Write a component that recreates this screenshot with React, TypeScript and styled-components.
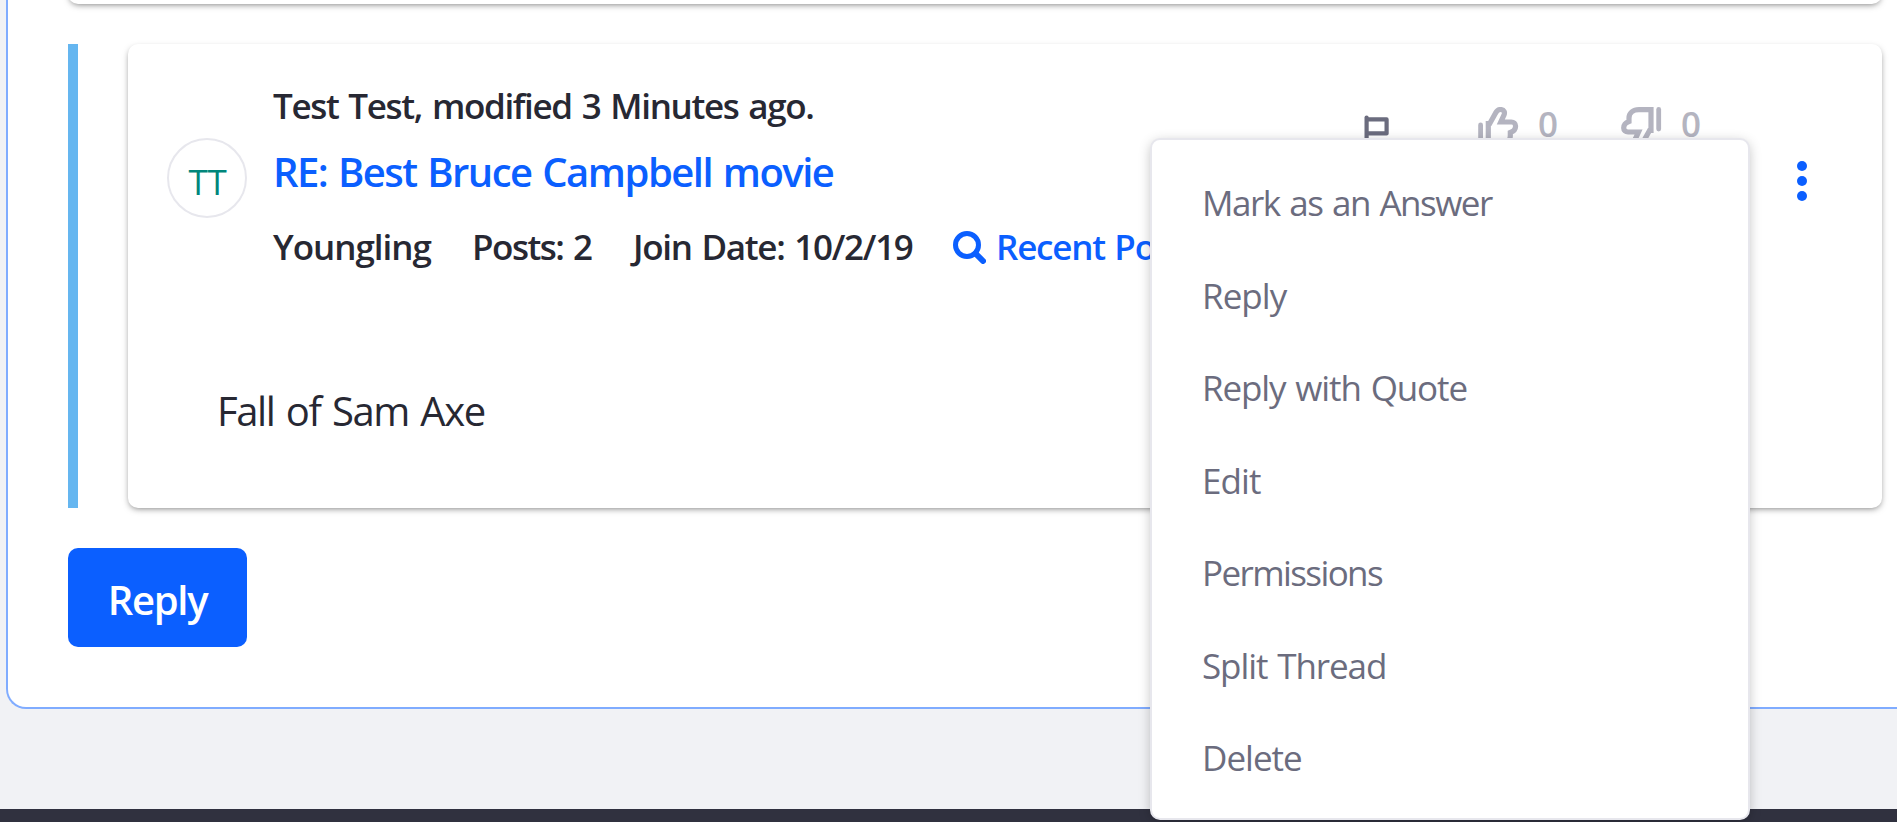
import React from "react";
import styled, { createGlobalStyle } from "styled-components";

const GlobalStyle = createGlobalStyle`
  * { box-sizing: border-box; }
  html, body { margin: 0; height: 822px; overflow: hidden; }
  body {
    background: #f1f2f5;
    color: #272833;
    font-family: "Segoe UI", "Open Sans", "Noto Sans", sans-serif;
    font-size: 40px;
    line-height: 1.5;
  }
`;

const Page = styled.div`
  position: relative;
  display: flex;
  flex-direction: column;
  height: 822px;
  overflow: hidden;
`;

const Panel = styled.main`
  display: flex;
  flex: none;
  flex-direction: column;
  align-items: flex-start;
  height: 709px;
  margin-left: 6px;
  padding: 0 15px 0 60px;
  background: #fff;
  border: 2px solid #80acff;
  border-top: 0;
  border-right: 0;
  border-bottom-left-radius: 20px;
`;

const Footer = styled.footer`
  height: 13px;
  margin-top: 100px;
  background: #30313f;
`;

const Card = styled.article`
  background: #fff;
  border-radius: 10px;
  box-shadow: 0 2.5px 7.5px -2.5px rgba(0, 0, 0, 0.6);
`;

const PreviousCard = styled(Card)`
  flex: none;
  width: 100%;
  height: 40px;
  margin-top: -36px;
`;

const Thread = styled.section`
  flex: none;
  width: 100%;
  height: 464px;
  margin-top: 40px;
  padding-left: 50px;
  border-left: 10px solid #65b6f0;
`;

const MessageCard = styled(Card)`
  height: 100%;
  padding: 35px 39px 0;
`;

const Header = styled.header`
  display: flex;
  height: 255px;
`;

const Avatar = styled.div`
  display: flex;
  align-items: center;
  justify-content: center;
  width: 80px;
  height: 80px;
  margin-top: 59px;
  padding: 9px 0 0 1px;
  border: 2px solid #e7e7ed;
  border-radius: 50%;
  color: #00867b;
  font-size: 35px;
  letter-spacing: -0.4px;
`;

const Summary = styled.div`
  width: 900px;
  margin-left: 26px;
  font-size: 35px;
  font-weight: 600;
  white-space: nowrap;
`;

const Byline = styled.div`
  height: 53px;
  line-height: 53px;
  letter-spacing: -1.35px;
  word-spacing: 2.2px;
`;

const Title = styled.a`
  display: block;
  height: 60px;
  margin-top: 10px;
  line-height: 60px;
  color: #0b5fff;
  font-size: 40px;
  letter-spacing: -1.5px;
  word-spacing: 1.7px;
`;

const Stats = styled.div`
  display: flex;
  height: 53px;
  margin-top: 18px;
  line-height: 53px;
`;

const Stat = styled.span<{ $width: number; $spacing: number }>`
  flex: none;
  width: ${(p) => p.$width}px;
  letter-spacing: ${(p) => p.$spacing}px;
  word-spacing: 2px;
`;

const RecentPosts = styled.a`
  display: flex;
  color: #0b5fff;
  letter-spacing: -1.2px;
  word-spacing: 1.5px;

  svg { flex: none; margin: 11px 10px 0 0; }
`;

const Actions = styled.div`
  display: flex;
  align-items: flex-start;
  margin-left: auto;
  padding-top: 28px;
  color: #b4b4c0;
  font-size: 35px;
  font-weight: 600;
`;

const FlagIcon = styled.svg`
  margin: 8px 89px 0 0;
  color: #6b6c7e;
`;

const Vote = styled.div`
  display: flex;
  width: 143px;

  svg { flex: none; }
  span {
    margin: -10px 0 0 19px;
    line-height: 53px;
  }
`;

const MoreButton = styled.button`
  width: 10px;
  height: 40px;
  margin: 82px 36px 0 33px;
  padding: 0;
  border: 0;
  background: none;
  color: #0b5fff;

  svg { display: block; }
`;

const Body = styled.p`
  margin: 47px 0 0 50px;
  letter-spacing: -1.4px;
  word-spacing: 2.4px;
`;

const ReplyButton = styled.button`
  flex: none;
  width: 179px;
  height: 99px;
  margin-top: 40px;
  padding: 5px 0 0;
  border: 0;
  border-radius: 10px;
  background: #0b5fff;
  color: #fff;
  font: inherit;
  font-weight: 600;
  letter-spacing: -1.3px;
`;

const Menu = styled.ul`
  position: absolute;
  top: 138px;
  left: 1150px;
  width: 600px;
  height: 682px;
  margin: 0;
  padding: 17px 0 0;
  list-style: none;
  background: #fff;
  border: 2px solid #e7e7ed;
  border-radius: 10px;
  box-shadow: 0 2.5px 12.5px -2.5px rgba(0, 0, 0, 0.3);
`;

const MenuItem = styled.li<{ $spacing: number }>`
  height: 92.5px;
  padding-left: 50px;
  line-height: 92.5px;
  color: #6b6c7e;
  font-size: 35px;
  letter-spacing: ${(p) => p.$spacing}px;
  word-spacing: 2px;
`;

const menuItems = [
  { label: "Mark as an Answer", spacing: -1.5 },
  { label: "Reply", spacing: -0.95 },
  { label: "Reply with Quote", spacing: -1.13 },
  { label: "Edit", spacing: -0.9 },
  { label: "Permissions", spacing: -1.6 },
  { label: "Split Thread", spacing: -1.1 },
  { label: "Delete", spacing: -1 },
];

/* A hand with the thumb pointing down; turned by 180 degrees it points up. */
const ThumbIcon = ({ up = false }: { up?: boolean }) => (
  <svg width="41" height="40" viewBox="0 0 41 40">
    <g
      fill="none"
      stroke="currentColor"
      strokeWidth="5.200"
      transform={up ? "rotate(180 20.150 20)" : undefined}
    >
      <path d="M37.700 2.500v19.500" strokeWidth="4.800" strokeLinecap="round" />
      <path d="M30 23.500V2.600H18C12 2.600 8 6 8 11v3.500c-3 1-5.300 3-5.300 6.500 0 2.500 1.800 4 4.300 4h10.500l-3 6.500c-1.500 3-.5 6 3.500 6 2.500 0 3.500-1 5-4l5.500-10z" />
    </g>
  </svg>
);

export default function App() {
  return (
    <>
      <GlobalStyle />
      <Page>
        <Panel>
          <PreviousCard />
          <Thread>
            <MessageCard>
              <Header>
                <Avatar>TT</Avatar>
                <Summary>
                  <Byline>Test Test, modified 3 Minutes ago.</Byline>
                  <Title>RE: Best Bruce Campbell movie</Title>
                  <Stats>
                    <Stat $width={199} $spacing={-1.03}>Youngling</Stat>
                    <Stat $width={161} $spacing={-1.5}>Posts: 2</Stat>
                    <Stat $width={320} $spacing={-1.3}>Join Date: 10/2/19</Stat>
                    <RecentPosts>
                      <svg width="33" height="33" viewBox="0 0 33 33" fill="none" stroke="currentColor">
                        <circle cx="14" cy="14" r="11.500" strokeWidth="5" />
                        <path d="M22.500 22.500l7.500 7.500" strokeWidth="6" strokeLinecap="round" />
                      </svg>
                      Recent Posts
                    </RecentPosts>
                  </Stats>
                </Summary>
                <Actions>
                  <FlagIcon width="25" height="40" viewBox="0 0 25 40" fill="none" stroke="currentColor" strokeWidth="4.200">
                    <path d="M2.600 2.500v36" strokeLinecap="round" />
                    <path d="M2.600 4.400h20v14h-20" strokeLinejoin="round" />
                  </FlagIcon>
                  <Vote>
                    <ThumbIcon up />
                    <span>0</span>
                  </Vote>
                  <Vote>
                    <ThumbIcon />
                    <span>0</span>
                  </Vote>
                </Actions>
                <MoreButton aria-label="More actions">
                  <svg width="10" height="40" viewBox="0 0 10 40" fill="currentColor">
                    <circle cx="5" cy="5" r="5" />
                    <circle cx="5" cy="20" r="5" />
                    <circle cx="5" cy="35" r="5" />
                  </svg>
                </MoreButton>
              </Header>
              <Body>Fall of Sam Axe</Body>
            </MessageCard>
          </Thread>
          <ReplyButton>Reply</ReplyButton>
        </Panel>
        <Footer />
        <Menu>
          {menuItems.map((item) => (
            <MenuItem key={item.label} $spacing={item.spacing}>{item.label}</MenuItem>
          ))}
        </Menu>
      </Page>
    </>
  );
}
